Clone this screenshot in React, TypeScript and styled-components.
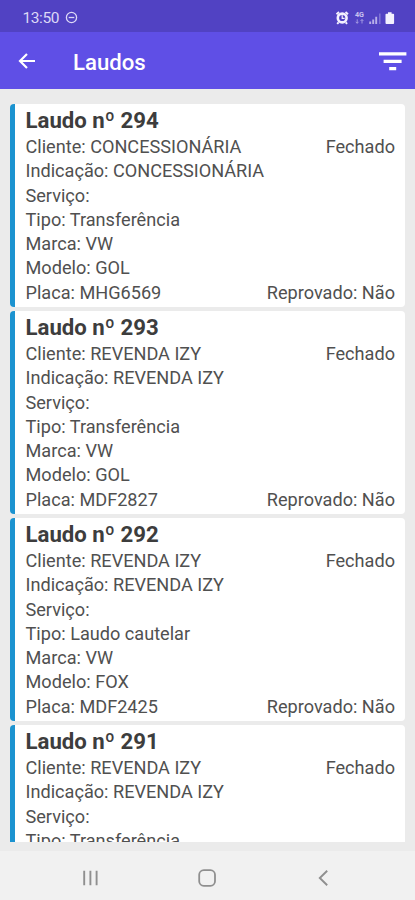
import React from 'react';
import styled, { createGlobalStyle } from 'styled-components';

const GlobalStyle = createGlobalStyle`
  * { box-sizing: border-box; }
  body { margin: 0; background: #ebebeb; font-family: Roboto, sans-serif; }
`;

const Screen = styled.div`
  display: flex;
  flex-direction: column;
  width: 415px;
  height: 900px;
  overflow: hidden;
  background: #ebebeb;
`;

const StatusBar = styled.div`
  display: flex;
  flex: 0 0 32px;
  align-items: center;
  justify-content: space-between;
  padding: 3px 20px 0 22.5px;
  background: #5142c3;
  color: #dcd8f6;
`;

const Clock = styled.div`
  display: flex;
  align-items: center;
  gap: 6px;
  font-size: 15.5px;
  line-height: 18px;
  letter-spacing: -0.4px;
`;

const Indicators = styled.div`
  display: flex;
  align-items: center;
`;

const AppBar = styled.header`
  display: flex;
  flex: 0 0 57px;
  align-items: center;
  padding: 0 8px 0 17px;
  background: #5f4fe6;
  color: #fff;
`;

const BarTitle = styled.h1`
  flex: 1;
  margin: 3px 0 0 37px;
  font-size: 22.2px;
  font-weight: 500;
  line-height: 28px;
`;

const IconButton = styled.button`
  display: flex;
  padding: 0;
  border: 0;
  background: none;
  color: inherit;
`;

const List = styled.main`
  flex: 0 0 753px;
  display: flex;
  flex-direction: column;
  gap: 4px;
  overflow: hidden;
  padding: 15px 10px 0;
`;

const Card = styled.article`
  flex: 0 0 203px;
  padding: 0 10px 0 10.5px;
  border-left: 5px solid #1c93d0;
  border-radius: 4px;
  background: #fff;
  color: #505050;
`;

const CardTitle = styled.h2`
  margin: 0;
  padding-top: 1px;
  height: 31px;
  font-size: 22.2px;
  font-weight: 700;
  line-height: 30px;
  color: #3d3d3d;
`;

const Row = styled.div`
  display: flex;
  justify-content: space-between;
  height: 24.25px;
  font-size: 18.14px;
  line-height: 24.25px;
  white-space: nowrap;
`;

const NavBar = styled.nav`
  display: flex;
  flex: 0 0 49px;
  margin-top: auto;
  align-items: center;
  justify-content: space-between;
  padding: 4px 83px 0 81px;
  background: #f1f1f1;
  color: #8f8f8f;
`;

const DoNotDisturb = () => (
  <svg width="13" height="13" viewBox="0 0 13 13" fill="none" stroke="currentColor" strokeWidth="1.3">
    <circle cx="6.5" cy="6.5" r="5.1" />
    <path d="M3.7 6.5h5.6" />
  </svg>
);

const StatusIcons = () => (
  <svg width="60" height="16" viewBox="0 0 60 16" fill="none">
    <path d="M1.5 4.2 4 2M10.5 2 13 4.2M3.6 12.3l-1.4 1.6M10.7 12.3l1.4 1.6" stroke="#f3f1ff" strokeWidth="1.9" />
    <circle cx="7.2" cy="8" r="4.4" fill="#5142c3" stroke="#f3f1ff" strokeWidth="2.6" />
    <path d="M7.2 5.3v3h2.4" stroke="#f3f1ff" strokeWidth="1.2" />
    <text x="20" y="7.2" fill="#c9c3f0" fontFamily="Roboto, sans-serif" fontSize="7" fontWeight="700" textLength="9" lengthAdjust="spacingAndGlyphs">4G</text>
    <path d="M22.2 9.3v4m-1.5-1.5 1.5 1.5 1.3-1.5M27 13.5v-4m-1.5 1.5L27 9.5l1.4 1.5" stroke="#aaa0e4" strokeWidth=".9" />
    <path d="M35.2 11.5V14M38.2 9.5V14M41.2 6.8V14" stroke="#b9b1e9" strokeWidth="1.9" />
    <path d="M44.8 3.5V14" stroke="#7e72d4" strokeWidth="1.6" />
    <path d="M53 2.2h3.6v1.5h1.6q.9 0 .9.9v8.5q0 .9-.9.9h-6.8q-.9 0-.9-.9V4.6q0-.9.9-.9H53Z" fill="#f3f1ff" />
  </svg>
);

const BackArrow = () => (
  <svg width="19" height="18" viewBox="0 0 19 18" fill="none" stroke="currentColor" strokeWidth="2.2">
    <path d="M18 9H3.2M10 2 3 9l7 7" />
  </svg>
);

const FilterIcon = () => (
  <svg width="28" height="20" viewBox="0 0 28 20" fill="currentColor">
    <path d="M0 1.2h27.4v3.3H0zM4.6 8.8h18v3.3h-18zM10.2 16h7v3.3h-7z" />
  </svg>
);

const RecentsIcon = () => (
  <svg width="18" height="18" viewBox="0 0 18 18" stroke="currentColor" strokeWidth="1.9">
    <path d="M3.2 1.7v14.6M9.4 1.7v14.6M15.6 1.7v14.6" />
  </svg>
);

const HomeIcon = () => (
  <svg width="18" height="18" viewBox="0 0 18 18" fill="none" stroke="currentColor" strokeWidth="1.8">
    <rect x="1.2" y="1.2" width="15.8" height="15.6" rx="4.6" />
  </svg>
);

const BackIcon = () => (
  <svg width="18" height="18" viewBox="0 0 18 18" fill="none" stroke="currentColor" strokeWidth="1.9">
    <path d="M13.2 1.8 5.8 9l7.4 7.2" />
  </svg>
);

interface Report {
  number: number;
  client: string;
  type: string;
  model: string;
  plate: string;
}

const reports: Report[] = [
  { number: 294, client: 'CONCESSIONÁRIA', type: 'Transferência', model: 'GOL', plate: 'MHG6569' },
  { number: 293, client: 'REVENDA IZY', type: 'Transferência', model: 'GOL', plate: 'MDF2827' },
  { number: 292, client: 'REVENDA IZY', type: 'Laudo cautelar', model: 'FOX', plate: 'MDF2425' },
  { number: 291, client: 'REVENDA IZY', type: 'Transferência', model: '', plate: '' },
];

const ReportCard = ({ report }: { report: Report }) => (
  <Card>
    <CardTitle>Laudo nº {report.number}</CardTitle>
    <Row><span>Cliente: {report.client}</span><span>Fechado</span></Row>
    <Row>Indicação: {report.client}</Row>
    <Row>Serviço:</Row>
    <Row>Tipo: {report.type}</Row>
    {report.plate && (
      <>
        <Row>Marca: VW</Row>
        <Row>Modelo: {report.model}</Row>
        <Row><span>Placa: {report.plate}</span><span>Reprovado: Não</span></Row>
      </>
    )}
  </Card>
);

export default function App() {
  return (
    <>
      <GlobalStyle />
      <Screen>
        <StatusBar>
          <Clock>13:50<DoNotDisturb /></Clock>
          <Indicators><StatusIcons /></Indicators>
        </StatusBar>
        <AppBar>
          <IconButton aria-label="Voltar"><BackArrow /></IconButton>
          <BarTitle>Laudos</BarTitle>
          <IconButton aria-label="Filtrar"><FilterIcon /></IconButton>
        </AppBar>
        <List>
          {reports.map((report) => <ReportCard key={report.number} report={report} />)}
        </List>
        <NavBar>
          <RecentsIcon />
          <HomeIcon />
          <BackIcon />
        </NavBar>
      </Screen>
    </>
  );
}
